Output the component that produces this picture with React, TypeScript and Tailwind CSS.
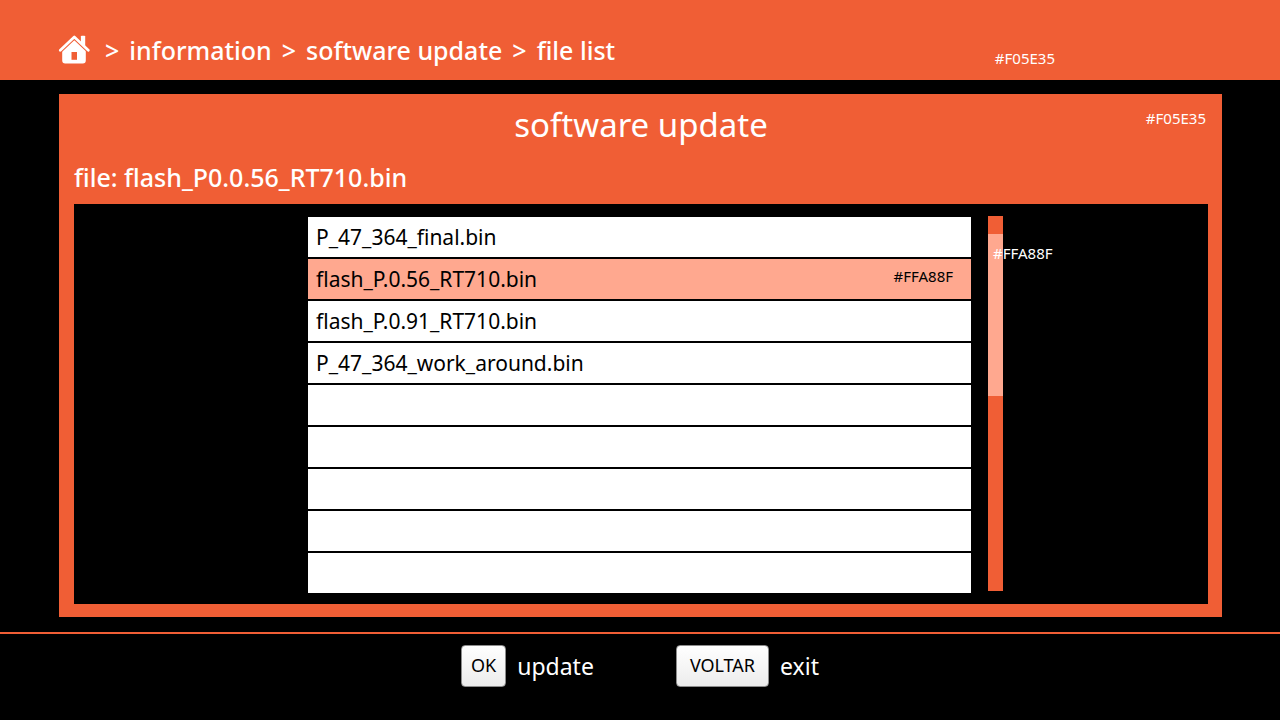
import { useState } from 'react';

const files = [
  'P_47_364_final.bin',
  'flash_P.0.56_RT710.bin',
  'flash_P.0.91_RT710.bin',
  'P_47_364_work_around.bin',
  '',
  '',
  '',
  '',
  '',
];

function HomeIcon() {
  return (
    <svg viewBox="0 0 32 32" className="size-8 fill-white" aria-hidden="true">
      <path d="M5.200 15.500 16.300 4.500 27.800 15.900V26.500a3 3 0 0 1-3 3H7.200a3 3 0 0 1-3-3V17Z" />
      <path d="M13.500 18h5.500v7.800h-5.500Z" className="fill-[#f05e35]" />
      <path d="M2 17 16.300 3.600 30.600 17" fill="none" className="stroke-[#f05e35]" strokeWidth="4" strokeLinejoin="round" />
      <path d="M22.900 2.600q0-.9.900-.9h2.500q.9 0 .9.900V13.500L22.900 9Z" />
      <path d="M2.300 16.300 16.300 2.900 30.300 16.300" fill="none" className="stroke-white" strokeWidth="2.700" strokeLinecap="round" strokeLinejoin="round" />
    </svg>
  );
}

function Header() {
  return (
    <header className="flex h-20 items-start bg-[#f05e35] pl-[58px] text-white">
      <nav aria-label="Breadcrumb" className="flex-1 pt-8">
        <ol className="flex items-center gap-2.5 text-[25px]/9 font-medium">
          <li className="mr-[5px]">
            <a href="#home" aria-label="home" className="block">
              <HomeIcon />
            </a>
          </li>
          <li aria-hidden="true">&gt;</li>
          <li><a href="#information">information</a></li>
          <li aria-hidden="true">&gt;</li>
          <li><a href="#software-update">software update</a></li>
          <li aria-hidden="true">&gt;</li>
          <li aria-current="page">file list</li>
        </ol>
      </nav>
      <span className="mr-[225px] pt-12 text-[15px]/5">#F05E35</span>
    </header>
  );
}

function FileList({ selected, onSelect }: { selected: number; onSelect: (i: number) => void }) {
  return (
    <ul className="flex flex-col gap-0.5">
      {files.map((name, i) => (
        <li key={i}>
          <button
            type="button"
            disabled={!name}
            aria-pressed={name ? i === selected : undefined}
            aria-label={name || 'empty slot'}
            onClick={() => onSelect(i)}
            className={`flex h-10 w-full items-center justify-between pr-[18px] pl-2 text-left text-[21px]/8 text-black ${
              i === selected ? 'bg-[#ffa88f]' : 'bg-white'
            }`}
          >
            <span>{name}</span>
            {i === selected && <span className="pb-1.5 text-[15px]/5">#FFA88F</span>}
          </button>
        </li>
      ))}
    </ul>
  );
}

function Scrollbar() {
  return (
    <div className="pl-[17px]">
      <div className="relative -mt-px h-[375px] w-[15px] bg-[#f05e35] pt-[18px]">
        <div className="h-[162px] bg-[#ffa88f]" />
        <span className="absolute top-[27px] left-[5px] text-[15px]/5 text-white">#FFA88F</span>
      </div>
    </div>
  );
}

function KeyHint({ keyName, label }: { keyName: string; label: string }) {
  return (
    <button type="button" className="flex items-center gap-[11px] text-[23px]/8 text-white">
      <kbd
        className={`flex h-[42px] items-center rounded-[4px] border border-[#8c8c8c] bg-linear-to-b from-white to-[#ececec] pb-0.5 font-['Noto_Sans','Open_Sans',sans-serif] text-[18px]/6 text-black ${
          keyName.length > 2 ? 'px-[13px]' : 'px-[9px]'
        }`}
      >
        {keyName}
      </kbd>
      <span>{label}</span>
    </button>
  );
}

export default function App() {
  const [selected, setSelected] = useState(1);

  return (
    <div className="flex min-h-screen flex-col bg-black font-['Noto_Sans','Open_Sans',sans-serif]">
      <Header />
      <main className="mx-[58px] mt-3.5 ml-[59px] bg-[#f05e35] px-3.5 pb-[13px] pl-[15px] text-white">
        <div className="grid grid-cols-[1fr_auto_1fr] pt-2">
          <h1 className="col-start-2 text-[33px]/[46px]">software update</h1>
          <span className="justify-self-end pt-1.5 pr-0.5 text-[15px]/5">#F05E35</span>
        </div>
        <p className="pt-3 pb-2.5 text-[25px]/[34px] font-medium">file: flash_P0.0.56_RT710.bin</p>
        <section className="grid grid-cols-[1fr_663px_1fr] bg-black pt-[13px] pr-[3px] pb-[11px]" aria-label="files">
          <div />
          <FileList selected={selected} onSelect={setSelected} />
          <Scrollbar />
        </section>
      </main>
      <footer className="mt-[15px] flex justify-center gap-[82px] border-t-2 border-[#f05e35] pt-[11px]">
        <KeyHint keyName="OK" label="update" />
        <KeyHint keyName="VOLTAR" label="exit" />
      </footer>
    </div>
  );
}
